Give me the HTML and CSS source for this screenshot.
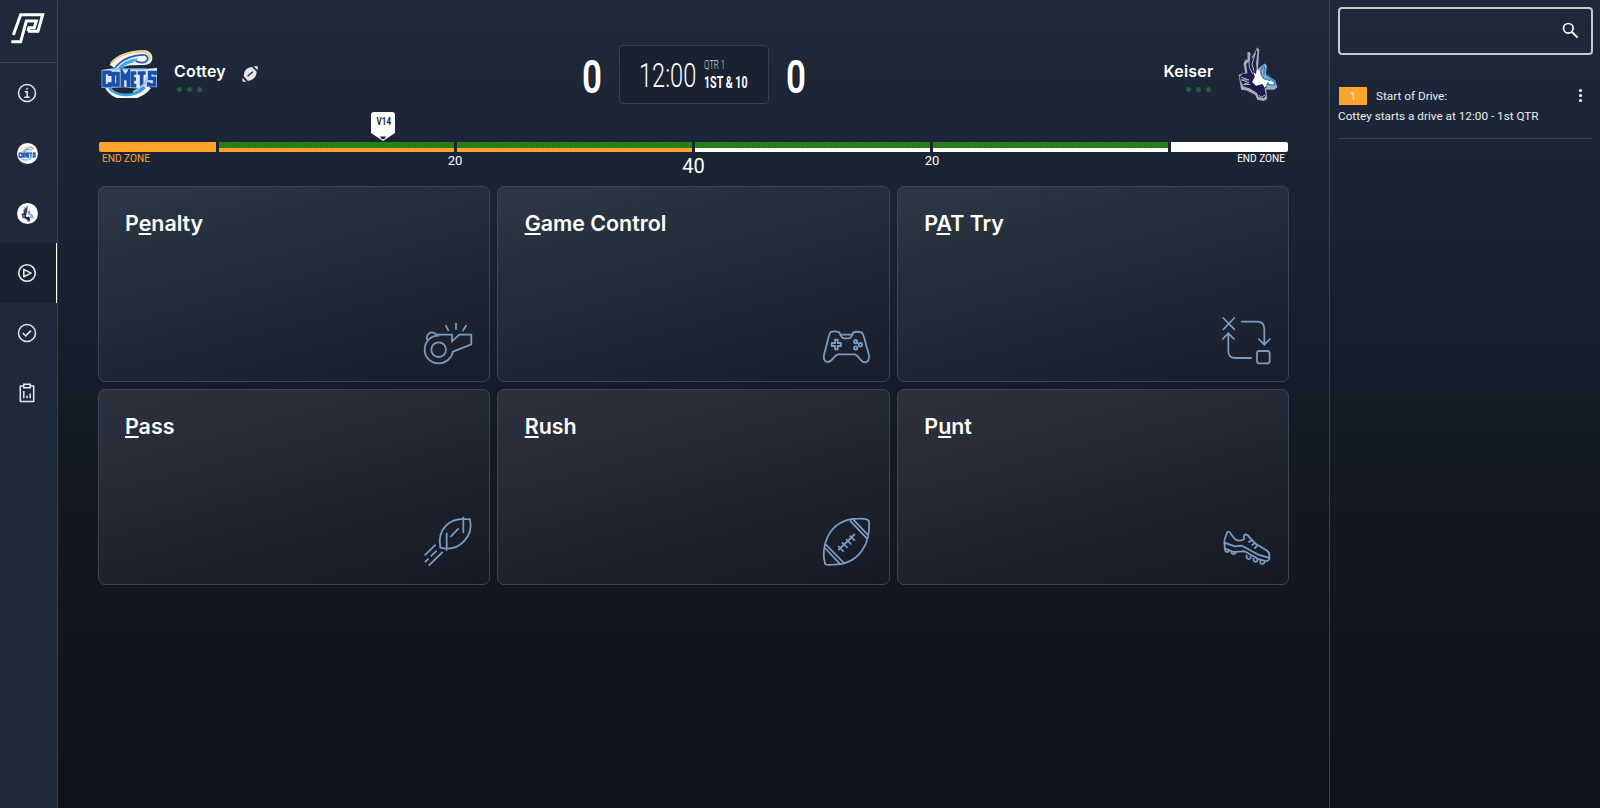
FILE: index.html
```html
<!DOCTYPE html>
<html lang="en">
<head>
    <meta charset="UTF-8">
    <meta name="viewport" content="width=device-width, initial-scale=1.0">
    <title>Cottey vs Keiser</title>
    <link rel="stylesheet" href="styles.css">
</head>
<body>
    <!-- shared team logos -->
    <svg class="defs" width="0" height="0">
        <symbol id="comets" viewBox="0 0 168 144">
            <path d="M26 44C44 14 92-2 132 1c22 3 28 24 16 38-12 10-40 4-70 8l-30 12z" fill="#f4f6fa"/>
            <path d="M30 40C52 12 98 2 132 6c16 4 18 18 12 26" fill="none" stroke="#f3cd72" stroke-width="6"/>
            <path d="M42 54C62 26 104 12 132 15c14 6 8 20-4 22-8 2-16 0-24-4" fill="none" stroke="#2559b4" stroke-width="5"/>
            <path d="M46 60C64 34 92 24 112 26c-10 4-12 12-24 14-14 4-20 10-26 20z" fill="#3fa9ea"/>
            <path d="M18 108c20 44 92 44 126 2" fill="none" stroke="#f4f6fa" stroke-width="15"/>
            <path d="M24 114c24 28 78 28 108-2" fill="none" stroke="#3ba0e4" stroke-width="8"/>
            <path d="M2 60l26-4h112l28-2v58l-40-2-14 6-44-4-68 2z" fill="#dfe8f7"/>
            <path d="M32 58h104" stroke="#6dc0ee" stroke-width="6" stroke-dasharray="5 2"/>
            <g fill="none" stroke="#1a4fa8" stroke-width="11">
                <path d="M26 78V67H9v40h17V97M37 71h14v34H37zM64 112V69l9 14 9-14v43M106 69H94v38h12M94 87h11M110 69h24M122 69v38M162 76v-8h-16v17h15v20h-18v-8"/>
            </g>
            <path d="M96 126c22-8 36-22 44-44" fill="none" stroke="#8cc6f3" stroke-width="6"/>
        </symbol>
        <symbol id="seahawk" viewBox="0 0 120 164">
            <path d="M58 1l6 8-3 40-1 18 20-17 7 6-3 26 28 20 7 20-10 8-24-1 3 28-10 7-20-4-6-14-26-14-17-2-8-46 20-6-5-28 6-12 6 1V15l8 1 5 17z" fill="#a9adbb"/>
            <path d="M57 7l1 10-4 34 2 18 8 34 24 18-8 6 4 20-6 8-16-3-5-12-23-15-18-5-9-18-3-12 9-8 15-2-4-28 6-6 6-6V22l8 14z" fill="#1f1d4e"/>
            <path d="M56 68l-2 14-8-6 4 16-8 14 12 12 20-6 6 12 10-10 18 4-2-10-22-12-14-6-6-18z" fill="#fff"/>
            <path d="M52 18l-10 34 6 22M32 36l2 26 10 20M8 92l24 8-22 0 22 8-16 6 20 0M62 146l8 6 12-6" fill="none" stroke="#b9bccb" stroke-width="3"/>
            <path d="M80 56C64 70 66 82 78 96l20 6M80 60l-2 26M84 84l28 22-2 10-22-2 4-6" fill="none" stroke="#2a8bd2" stroke-width="5"/>
        </symbol>
    </svg>

    <div class="app">
        <nav class="sidebar">
            <a class="brand" href="#">
                <svg width="34" height="31" viewBox="0 0 102 93">
                    <path d="M10 66L32 5h66L84 55H54M54 55l3-11h16l6-20H49L32 86H4" fill="none" stroke="#fff" stroke-width="9"/>
                </svg>
            </a>
            <a class="nav-item" href="#">
                <svg width="20" height="20" viewBox="0 0 20 20" fill="none" stroke="currentColor" stroke-width="1.5">
                    <circle cx="10" cy="10" r="8.5"/>
                    <path d="M7.8 8.8h2.4v5M7.3 14.2h5.4"/>
                    <circle cx="10" cy="5.9" r=".7" fill="currentColor" stroke-width=".6"/>
                </svg>
            </a>
            <a class="nav-item" href="#"><span class="avatar"><svg width="18" height="15"><use href="#comets"/></svg></span></a>
            <a class="nav-item" href="#"><span class="avatar"><svg width="13" height="17"><use href="#seahawk"/></svg></span></a>
            <a class="nav-item active" href="#">
                <svg width="20" height="20" viewBox="0 0 20 20" fill="none" stroke="currentColor" stroke-width="1.6">
                    <circle cx="10" cy="10" r="8.3"/>
                    <path d="M6.8 6.4v7.4l7.2-3.7z" stroke-linejoin="round"/>
                </svg>
            </a>
            <a class="nav-item" href="#">
                <svg width="20" height="20" viewBox="0 0 20 20" fill="none" stroke="currentColor" stroke-width="1.5">
                    <circle cx="10" cy="10" r="8.5"/>
                    <path d="M5.8 10l2.9 2.9 5.3-5.3"/>
                </svg>
            </a>
            <a class="nav-item" href="#">
                <svg width="20" height="20" viewBox="0 0 20 20" fill="none" stroke="currentColor" stroke-width="1.5">
                    <path d="M3.3 3h13.4v15.6H3.3z" stroke-linejoin="round"/>
                    <path d="M6.8 1.3h6.4v3.4H6.8z" fill="#1e293b"/>
                    <path d="M6.8 8v7.3M10 12.4v2.9M13.2 10.6v4.7"/>
                </svg>
            </a>
        </nav>

        <main class="game">
            <header class="scoreboard">
                <div class="team">
                    <svg class="team-logo" width="56" height="48"><use href="#comets"/></svg>
                    <div class="team-info">
                        <div class="team-name">Cottey</div>
                        <div class="timeouts"><i></i><i></i><i></i></div>
                    </div>
                    <svg class="possession" width="16" height="16" viewBox="0 0 48 48">
                        <path d="M5 30C6 12 16 4 30 3l14 14c-1 16-10 26-26 28z" fill="#e4e6e9"/>
                        <path d="M35 1q12-1 12 0v12zM1 35l12 12H2z" fill="#e4e6e9"/>
                        <path d="M17 31l15-14" stroke="#1c2637" stroke-width="4"/>
                    </svg>
                </div>
                <div class="center">
                    <svg class="score" width="20" height="36"><text transform="scale(.74 1)" y="35" textLength="27" lengthAdjust="spacingAndGlyphs">0</text></svg>
                    <div class="clock">
                        <svg class="time" width="64" height="28"><text transform="scale(.69 1)" y="26" textLength="83" lengthAdjust="spacingAndGlyphs">12:00</text></svg>
                        <div class="period">
                            <svg class="quarter" width="44" height="10"><text transform="scale(.62 1)" y="7.7" textLength="34" lengthAdjust="spacingAndGlyphs">QTR 1</text></svg>
                            <svg class="down" width="44" height="14"><text transform="scale(.68 1)" y="12" textLength="64" lengthAdjust="spacingAndGlyphs">1ST &amp; 10</text></svg>
                        </div>
                    </div>
                    <svg class="score" width="20" height="36"><text transform="scale(.74 1)" y="35" textLength="27" lengthAdjust="spacingAndGlyphs">0</text></svg>
                </div>
                <div class="team away">
                    <div class="team-info">
                        <div class="team-name">Keiser</div>
                        <div class="timeouts"><i></i><i></i><i></i></div>
                    </div>
                    <svg class="team-logo" width="40" height="54"><use href="#seahawk"/></svg>
                </div>
            </header>

            <section class="field">
                <div class="zone home-zone"></div>
                <div class="turf home"></div>
                <div class="turf home"></div>
                <div class="turf"></div>
                <div class="turf"></div>
                <div class="zone"></div>
                <svg class="marker" width="24" height="30" viewBox="0 0 24 30">
                    <path d="M3 0h18a3 3 0 0 1 3 3v18l-12 8L0 21V3a3 3 0 0 1 3-3z" fill="#fff"/>
                    <path d="M9 24.5h6q-1 2.7-3 2.7t-3-2.7z" fill="#1c2637"/>
                    <text x="5.5" y="13" textLength="14.5" lengthAdjust="spacingAndGlyphs">V14</text>
                </svg>
            </section>
            <div class="yards">
                <span class="end home-end">END ZONE</span>
                <span class="yard">20</span>
                <span class="yard mid">40</span>
                <span class="yard">20</span>
                <span class="end">END ZONE</span>
            </div>

            <section class="plays">
                <button class="play">
                    <span>P<u>e</u>nalty</span>
                    <svg width="50" height="50" viewBox="69 48 150 150">
                        <path d="M81 120C77 103 95 89 109 104h47v20l22-20h36v29l-55 22c-4 20-22 35-43 35-24 0-42-18-42-41 0-26 20-43 43-42"/>
                        <circle cx="116" cy="149" r="22"/>
                        <path d="M137 76l9 17M168 69v20M199 76l-11 17"/>
                    </svg>
                </button>
                <button class="play">
                    <span><u>G</u>ame Control</span>
                    <svg width="50" height="50" viewBox="69 48 150 150">
                        <path d="M92 96q12-4 26 1c4 10 7 18 14 18h15c7 0 10-8 13-18q14-4 26 1c6 8 8 20 12 36l9 31c1 12-2 21-11 22-15 1-17-18-31-24h-52c-14 6-16 24-31 23-10-2-12-10-10-22l8-30c4-16 7-32 12-38zM118 104h42"/>
                        <path d="M105 119h8v10h10v9h-10v10h-8v-10H95v-9h10z" stroke-linejoin="round"/>
                        <circle cx="167" cy="125" r="5"/><circle cx="181" cy="134" r="5"/><circle cx="167" cy="144" r="5"/>
                    </svg>
                </button>
                <button class="play">
                    <span>P<u>A</u>T Try</span>
                    <svg width="50" height="50" viewBox="69 48 150 150" stroke-linecap="round">
                        <path d="M73 54l33 34M106 54L73 88M128 65h46q22 0 22 22v45M179 117l17 17 17-17M71 117l17-17 17 17M88 102v50q0 22 22 22h46"/>
                        <rect x="174" y="153" width="38" height="37" rx="7"/>
                    </svg>
                </button>
                <button class="play">
                    <span><u>P</u>ass</span>
                    <svg width="50" height="50" viewBox="69 87 150 150">
                        <path d="M121 173C111 120 146 78 210 88c11 50-32 100-89 85zM140 128v54M190 80v50M151 141l25-26M74 196l33-32M75 216l11-10M92 199l18-17M86 227l42-41"/>
                    </svg>
                </button>
                <button class="play">
                    <span><u>R</u>ush</span>
                    <svg width="50" height="50" viewBox="69 87 150 150">
                        <path d="M76 223C60 180 80 86 176 86q28-1 31 8c5 60-24 130-109 130q-16 2-22-1zM160 89l43 45M150 92l51 54M77 163l55 56M75 174l46 49"/>
                        <path d="M115 180l50-48M114 168l17 17M126 157l17 17M138 147l16 16M149 137l16 15"/>
                    </svg>
                </button>
                <button class="play">
                    <span>P<u>u</u>nt</span>
                    <svg width="50" height="50" viewBox="69 87 150 150" stroke-linejoin="round">
                        <path d="M77 163c-5-7 2-20 7-34 2-6 8-5 11 1 12 22 25 27 41 17-5-8 2-17 9-12 6 5 14 18 26 27l31 19q9 5 9 14v13l-8 6-25-7-37-21q-6-3-14-2l-23 2-27-11zM77 158l30 11 22-2 49 27 30 9M148 157l11-7M158 166l11-8M166 176l8-9"/>
                        <path d="M79 177v5q4 9 11 0v-3M98 184v5q6 7 12 0v-4M143 194v10q6 7 12 0v-6M164 204v8q6 7 11 0v-6M184 210v9q6 7 12 0v-6"/>
                    </svg>
                </button>
            </section>
        </main>

        <aside class="log">
            <div class="search">
                <svg width="17" height="17" viewBox="0 0 17 17" fill="none" stroke="#fff">
                    <circle cx="6.3" cy="6.3" r="4.8" stroke-width="1.7"/>
                    <path d="M10 10l5.6 5.6" stroke-width="2"/>
                </svg>
            </div>
            <article class="entry">
                <div class="entry-head">
                    <span class="badge">1</span>
                    <span>Start of Drive:</span>
                    <span class="more"><i></i><i></i><i></i></span>
                </div>
                <p>Cottey starts a drive at 12:00 - 1st QTR</p>
            </article>
        </aside>
    </div>
</body>
</html>
```
FILE: styles.css
```css
:root {
    --navy: #1e293b;
    --line: #364152;
    --orange: #ffa42b;
    --icon: #7c9cc4;
}

* {
    margin: 0;
    padding: 0;
    box-sizing: border-box;
}

body {
    font-family: Roboto, "Liberation Sans", sans-serif;
    color: #fff;
    background: #0f1219;
    overflow: hidden;
}

.defs {
    position: absolute;
}

svg {
    display: block;
    overflow: visible;
}

.app {
    display: flex;
    height: 100vh;
    background: linear-gradient(180deg, #1e293b 0%, #182130 35%, #131822 60%, #0f1219 100%);
}

/* sidebar */
.sidebar {
    width: 58px;
    background: var(--navy);
    border-right: 1px solid var(--line);
}

.sidebar a {
    display: flex;
    align-items: center;
    justify-content: center;
    padding-right: 3px;
    color: #e8eaed;
}

.sidebar .brand {
    height: 63px;
    padding: 0 4px 5px 0;
    border-bottom: 1px solid var(--line);
}

.nav-item {
    height: 60px;
}

.nav-item.active {
    background: #1a2230;
    border-right: 1px solid #fff;
}

.avatar {
    display: flex;
    align-items: center;
    justify-content: center;
    width: 21px;
    height: 21px;
    border-radius: 50%;
    background: #fff;
}

/* main area */
.game {
    flex: 1;
    padding: 45px 39.5px 0 39.5px;
}

.scoreboard {
    display: grid;
    grid-template-columns: 1fr auto 1fr;
    height: 97px;
    align-items: start;
}

.team {
    display: flex;
    align-items: flex-start;
    padding: 5px 0 0 3.5px;
}

.team-info {
    margin: 11px 0 0 17px;
}

.team-name {
    font: 600 16px/20px Inter, sans-serif;
    letter-spacing: 0.2px;
}

.timeouts {
    display: flex;
    gap: 5px;
    margin: 6px 0 0 3px;
}

.timeouts i {
    width: 5px;
    height: 5px;
    border-radius: 50%;
    background: #22633e;
}

.possession {
    margin: 16px 0 0 16px;
}

.away {
    justify-content: flex-end;
    padding: 2px 12px 0 0;
}

.away .team-info {
    margin: 14px 24px 0 0;
}

.away .timeouts {
    justify-content: flex-end;
    margin-right: 3px;
}

.center {
    display: flex;
    align-items: flex-start;
    gap: 17px;
}

.score {
    margin-top: 13px;
    font-size: 47px;
    font-weight: 600;
    fill: #fff;
}

.clock {
    display: flex;
    width: 150px;
    height: 59px;
    padding: 15px 0 0 19px;
    border: 1px solid var(--line);
    border-radius: 4px;
    background: #1a2130;
}

.period {
    display: flex;
    flex-direction: column;
    gap: 5px;
    margin-left: 1px;
}

.time {
    font-size: 34px;
    font-weight: 300;
    fill: #fff;
}

.quarter {
    font-size: 12.5px;
    font-weight: 300;
    fill: #d5d8dd;
}

.down {
    font-size: 16px;
    font-weight: 700;
    fill: #fff;
}

/* field */
.field {
    position: relative;
    display: grid;
    grid-template-columns: 117fr 235fr 235fr 235fr 235fr 117fr;
    gap: 3px;
    height: 10px;
    margin: 0 1.5px;
}

.zone {
    background: #fff;
    border-radius: 0 2px 2px 0;
}

.home-zone {
    background: var(--orange);
    border-radius: 2px 0 0 2px;
}

.turf {
    background: repeating-linear-gradient(115deg, #278018 0 2px, #2a8619 2px 3px, #257b19 3px 5px);
    border-bottom: 4px solid #fff;
}

.turf.home {
    border-color: var(--orange);
}

.marker {
    position: absolute;
    left: 272px;
    top: -30px;
    font-size: 11.5px;
    font-weight: 700;
    fill: #1c2637;
}

.yards {
    display: grid;
    grid-template-columns: 238fr 236fr 241fr 236fr 238fr;
    height: 34px;
    margin: 0 1.5px;
    font-size: 13px;
    text-align: center;
}

.yard {
    padding-top: 1px;
    line-height: 16px;
}

.yard.mid {
    padding-top: 3px;
    font-size: 20px;
    line-height: 22px;
}

.end {
    padding: 1px 3px 0;
    font-size: 10.1px;
    line-height: 12px;
    text-align: right;
}

.home-end {
    text-align: left;
    color: var(--orange);
}

/* play buttons */
.plays {
    display: grid;
    grid-template-columns: repeat(3, 1fr);
    grid-auto-rows: 196px;
    gap: 7px;
}

.play {
    display: flex;
    flex-direction: column;
    justify-content: space-between;
    padding: 21.5px 16px 15px 26.5px;
    font: 600 21.4px/28px Inter, sans-serif;
    color: #fff;
    text-align: left;
    border: 1px solid #3f4653;
    border-radius: 7px;
    background: linear-gradient(165deg, #2e3746 0%, #25303c 30%, #202633 62%, #171d2a 100%);
    cursor: pointer;
}

.play:nth-child(n+4) {
    background: linear-gradient(165deg, #2e323e 0%, #232733 45%, #141924 100%);
}

.play u {
    text-decoration-thickness: 2px;
    text-underline-offset: 2px;
    text-decoration-skip-ink: none;
}

.play svg {
    align-self: flex-end;
    fill: none;
    stroke: var(--icon);
    stroke-width: 5.3;
}

/* play log */
.log {
    width: 271px;
    padding: 7px 7px 0 8px;
    border-left: 1px solid var(--line);
}

.search {
    display: flex;
    align-items: center;
    justify-content: flex-end;
    height: 48px;
    padding: 0 12px 1px 0;
    border: 2px solid #c5c8cd;
    border-radius: 4px;
}

.entry {
    margin-top: 31px;
    height: 53px;
    border-bottom: 1px solid var(--line);
    font-size: 11.75px;
    color: #eceef1;
}

.entry-head {
    display: flex;
    align-items: center;
    height: 19px;
}

.badge {
    width: 28px;
    height: 18px;
    margin: 0 9px 0 1px;
    line-height: 18px;
    text-align: center;
    background: var(--orange);
}

.more {
    display: flex;
    flex-direction: column;
    gap: 2px;
    margin: 0 11px 0 auto;
}

.more i {
    width: 3px;
    height: 3px;
    border-radius: 50%;
    background: #fff;
}

.entry p {
    margin-top: 4px;
    line-height: 15px;
}
```
